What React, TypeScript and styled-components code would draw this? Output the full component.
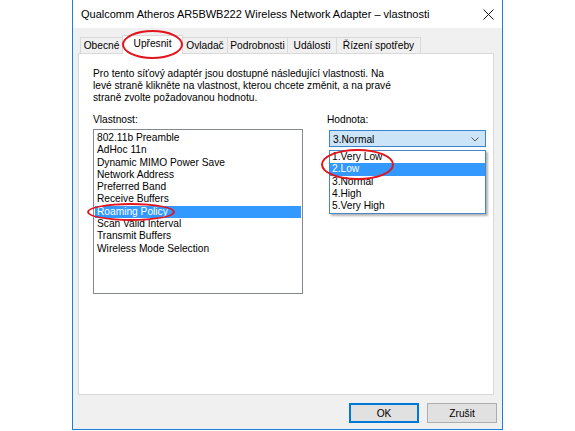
import React from 'react'
import styled, { createGlobalStyle } from 'styled-components'

const GlobalStyle = createGlobalStyle`
  html, body {
    margin: 0;
    padding: 0;
    background: #fff;
  }
  body {
    font-family: "Liberation Sans", Arial, sans-serif;
    color: #000;
  }
`

const Page = styled.div`
  position: relative;
  width: 575px;
  height: 431px;
  overflow: hidden;
  padding-left: 72px;
  box-sizing: border-box;
`

const Dialog = styled.div`
  width: 431px;
  height: 430px;
  box-sizing: border-box;
  border: 1px solid #1e7fd8;
  border-top: none;
  display: flex;
  flex-direction: column;
  background: #f0f0f0;
`

const TitleBar = styled.div`
  height: 28px;
  flex-shrink: 0;
  background: #fff;
  display: flex;
  align-items: center;
  padding: 0 8px 0 8px;
  font-size: 11px;
`

const Title = styled.span`
  flex: 1;
  white-space: nowrap;
`

const Body = styled.div`
  flex: 1;
  display: flex;
  flex-direction: column;
  padding: 7px 8px 6px 5px;
  font-size: 10.2px;
`

const TabStrip = styled.div`
  display: flex;
  height: 19px;
  padding-left: 3px;
  position: relative;
  z-index: 1;
`

const Tab = styled.div<{ $active?: boolean; $w: number }>`
  box-sizing: border-box;
  width: ${p => p.$w}px;
  height: ${p => (p.$active ? 19 : 16)}px;
  margin-top: ${p => (p.$active ? 0 : 2)}px;
  margin-left: -1px;
  border: 1px solid #d9d9d9;
  border-bottom: none;
  background: ${p => (p.$active ? '#fff' : '#f0f0f0')};
  display: flex;
  align-items: center;
  justify-content: center;
  padding-bottom: ${p => (p.$active ? 3 : 0)}px;
  white-space: nowrap;
  position: relative;
  z-index: ${p => (p.$active ? 2 : 1)};
`

const Panel = styled.div`
  margin-top: -1px;
  height: 342px;
  box-sizing: border-box;
  border: 1px solid #d9d9d9;
  background: #fff;
  padding: 14px 6px 0 14px;
`

const Description = styled.p`
  margin: 0;
  line-height: 12px;
  white-space: nowrap;
`

const Columns = styled.div`
  display: flex;
  margin-top: 10px;
`

const LeftColumn = styled.div`
  width: 210px;
  flex-shrink: 0;
`

const RightColumn = styled.div`
  position: relative;
  margin-left: 24px;
  width: 160px;
  flex-shrink: 0;
`

const Label = styled.div`
  line-height: 12px;
  height: 12px;
`

const ListBox = styled.div`
  margin-top: 3px;
  height: 165px;
  box-sizing: border-box;
  border: 1px solid #828790;
  padding: 2px 1px;
`

const ListItem = styled.div<{ $selected?: boolean }>`
  height: 12.3px;
  line-height: 12.3px;
  padding-left: 2px;
  white-space: nowrap;
  background: ${p => (p.$selected ? '#3399ff' : 'transparent')};
  color: ${p => (p.$selected ? '#fff' : '#000')};
`

const Combo = styled.div`
  margin-top: 4px;
  margin-left: 2px;
  width: 157px;
  height: 17px;
  box-sizing: border-box;
  border: 1px solid #3b83d1;
  background: #cce4f7;
  display: flex;
  align-items: center;
  padding: 1px 6px 0 3px;
`

const ComboText = styled.span`
  flex: 1;
`

const DropList = styled.div`
  position: absolute;
  top: 36px;
  left: 2px;
  width: 157px;
  box-sizing: border-box;
  border: 1px solid #4a86c6;
  background: #fff;
  padding: 0 0 1px;
  box-shadow: 2px 2px 2px rgba(0, 0, 0, 0.3);
`

const Footer = styled.div`
  display: flex;
  justify-content: flex-end;
  gap: 8px;
  margin-top: 8px;
  margin-right: -3px;
`

const Button = styled.button<{ $default?: boolean }>`
  width: 70px;
  height: 20px;
  box-sizing: border-box;
  margin: 0;
  padding: 0;
  font-family: inherit;
  font-size: 10.2px;
  color: #000;
  background: #e1e1e1;
  border: 1px solid ${p => (p.$default ? '#0078d7' : '#adadad')};
  box-shadow: ${p => (p.$default ? 'inset 0 0 0 1px #0078d7' : 'none')};
`

const Ring = styled.div<{ $x: number; $y: number; $w: number; $h: number }>`
  position: absolute;
  z-index: 10;
  left: ${p => p.$x}px;
  top: ${p => p.$y}px;
  width: ${p => p.$w}px;
  height: ${p => p.$h}px;
  box-sizing: border-box;
  border: 2.6px solid #e2141c;
  border-radius: 50%;
  pointer-events: none;
`

const tabs = [
  { label: 'Obecné', w: 43 },
  { label: 'Upřesnit', w: 61, active: true },
  { label: 'Ovladač', w: 46 },
  { label: 'Podrobnosti', w: 61 },
  { label: 'Události', w: 50 },
  { label: 'Řízení spotřeby', w: 85 },
]

const properties = [
  '802.11b Preamble',
  'AdHoc 11n',
  'Dynamic MIMO Power Save',
  'Network Address',
  'Preferred Band',
  'Receive Buffers',
  'Roaming Policy',
  'Scan Valid Interval',
  'Transmit Buffers',
  'Wireless Mode Selection',
]

const values = ['1.Very Low', '2.Low', '3.Normal', '4.High', '5.Very High']

export default function App() {
  return (
    <Page>
      <GlobalStyle />
      <Dialog>
        <TitleBar>
          <Title>Qualcomm Atheros AR5BWB222 Wireless Network Adapter – vlastnosti</Title>
          <svg width="11" height="11" viewBox="0 0 11 11">
            <path d="M0.5 0.5 L10.5 10.5 M10.5 0.5 L0.5 10.5" stroke="#111" strokeWidth="1" fill="none" />
          </svg>
        </TitleBar>
        <Body>
          <TabStrip>
            {tabs.map(t => (
              <Tab key={t.label} $w={t.w} $active={t.active}>
                {t.label}
              </Tab>
            ))}
          </TabStrip>
          <Panel>
            <Description>
              Pro tento síťový adaptér jsou dostupné následující vlastnosti. Na
              <br />
              levé straně klikněte na vlastnost, kterou chcete změnit, a na pravé
              <br />
              straně zvolte požadovanou hodnotu.
            </Description>
            <Columns>
              <LeftColumn>
                <Label>Vlastnost:</Label>
                <ListBox>
                  {properties.map(p => (
                    <ListItem key={p} $selected={p === 'Roaming Policy'}>
                      {p}
                    </ListItem>
                  ))}
                </ListBox>
              </LeftColumn>
              <RightColumn>
                <Label>Hodnota:</Label>
                <Combo>
                  <ComboText>3.Normal</ComboText>
                  <svg width="8" height="5" viewBox="0 0 8 5">
                    <path d="M0.5 0.5 L4 4 L7.5 0.5" stroke="#555" strokeWidth="1" fill="none" />
                  </svg>
                </Combo>
                <DropList>
                  {values.map(v => (
                    <ListItem key={v} $selected={v === '2.Low'}>
                      {v}
                    </ListItem>
                  ))}
                </DropList>
              </RightColumn>
            </Columns>
          </Panel>
          <Footer>
            <Button $default>OK</Button>
            <Button>Zrušit</Button>
          </Footer>
        </Body>
      </Dialog>
      <Ring $x={122} $y={30} $w={61} $h={29} />
      <Ring $x={87} $y={202.5} $w={88} $h={18} />
      <Ring $x={320.5} $y={148.5} $w={73} $h={31.5} />
    </Page>
  )
}
